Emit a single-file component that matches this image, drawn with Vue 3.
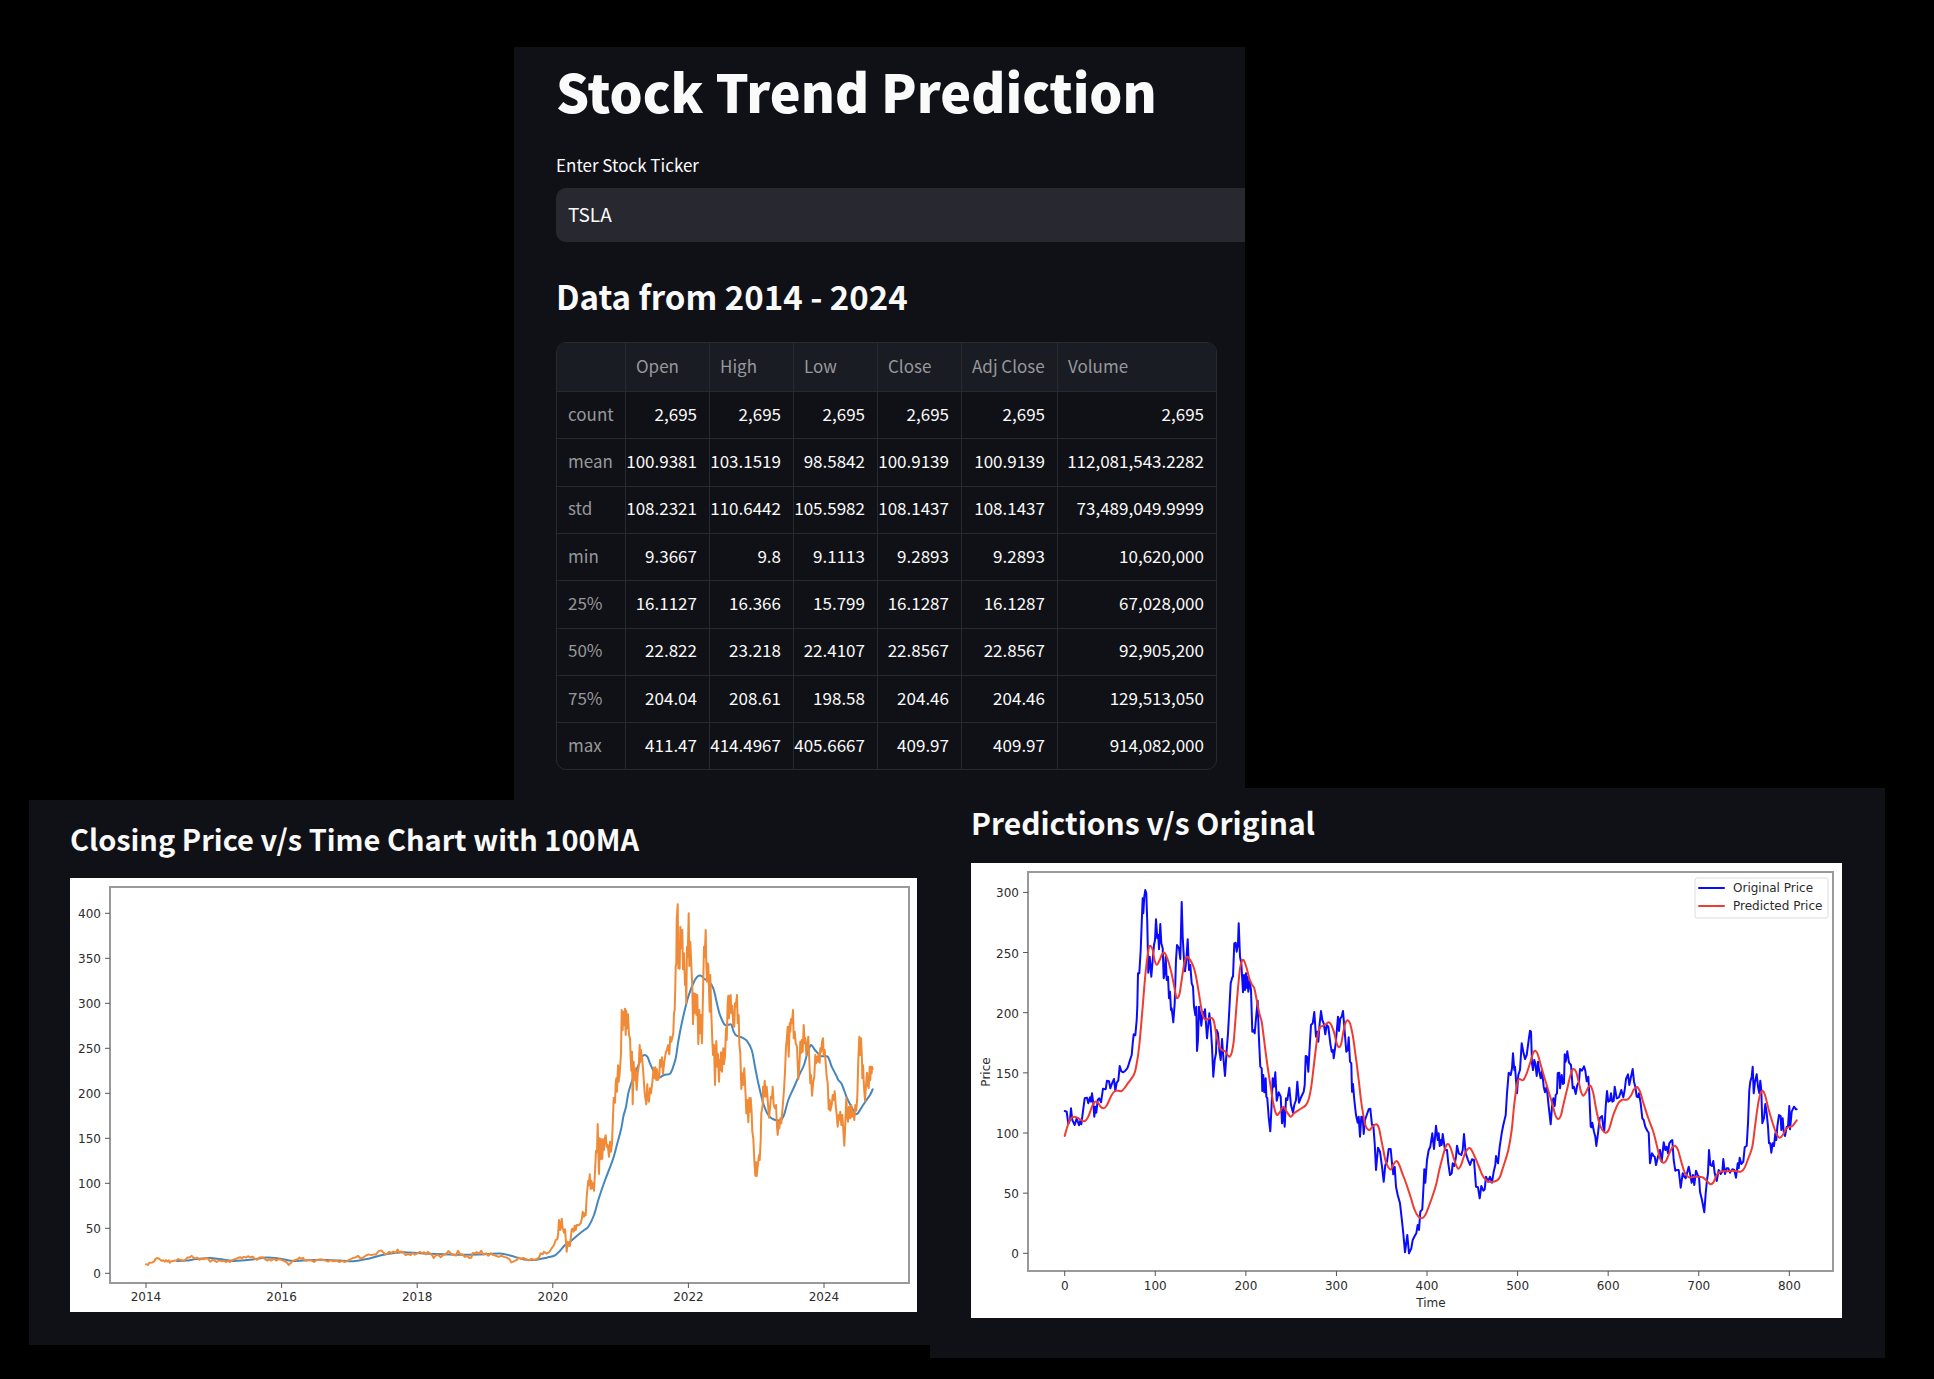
<script setup>
import { ref } from 'vue'

const ticker = ref('TSLA')

const columns = ['Open', 'High', 'Low', 'Close', 'Adj Close', 'Volume']
const rows = [
  ['count', '2,695', '2,695', '2,695', '2,695', '2,695', '2,695'],
  ['mean', '100.9381', '103.1519', '98.5842', '100.9139', '100.9139', '112,081,543.2282'],
  ['std', '108.2321', '110.6442', '105.5982', '108.1437', '108.1437', '73,489,049.9999'],
  ['min', '9.3667', '9.8', '9.1113', '9.2893', '9.2893', '10,620,000'],
  ['25%', '16.1127', '16.366', '15.799', '16.1287', '16.1287', '67,028,000'],
  ['50%', '22.822', '23.218', '22.4107', '22.8567', '22.8567', '92,905,200'],
  ['75%', '204.04', '208.61', '198.58', '204.46', '204.46', '129,513,050'],
  ['max', '411.47', '414.4967', '405.6667', '409.97', '409.97', '914,082,000'],
]

// Every section of a series has its own origin [x, y] and its vertical units per pixel.
const expand = (sections) =>
  sections.flatMap(({ at: [x0, y0], k = 3, d }) =>
    d.split(' ').map((p) => {
      const [x, y] = p.split(',').map(Number)
      return [x0 + x / 3, y0 + y / k]
    })
  )

const line = (sections) => 'M' + expand(sections).map((p) => p.map((n) => n.toFixed(1)).join(',')).join('L')

// Catmull-Rom spline through the points
const curve = (sections) => {
  const p = expand(sections)
  let d = `M${p[0]}`
  for (let i = 0; i < p.length - 1; i++) {
    const a = p[i - 1] || p[i]
    const b = p[i]
    const c = p[i + 1]
    const e = p[i + 2] || c
    const c1 = [b[0] + (c[0] - a[0]) / 6, b[1] + (c[1] - a[1]) / 6]
    const c2 = [c[0] - (e[0] - b[0]) / 6, c[1] - (e[1] - b[1]) / 6]
    d += 'C' + [...c1, ...c2, ...c].map((n) => n.toFixed(1)).join(' ')
  }
  return d
}

const closing = line([
  { at: [-50, -98], k: 2.751, d: '378,1332 384,1334 388,1328 397,1327 403,1324 406,1318 411,1315 417,1317 421,1320 426,1323 430,1321 434,1325 438,1321 442,1325 446,1321 449,1328 454,1324 460,1323 466,1322 470,1321 475,1318 480,1320 488,1322 496,1320 502,1314 508,1314 515,1309 520,1314 526,1316 532,1314 538,1320 544,1317 552,1318 560,1315 565,1318 571,1325 578,1320 584,1322 590,1326 598,1321 606,1324 612,1322 618,1326 624,1323 630,1326 636,1321 645,1318 654,1315 660,1313 666,1315 672,1312 678,1314 684,1310 690,1313 698,1311 704,1317 711,1320 718,1314 728,1313 735,1318 742,1322 748,1318 754,1322 762,1317 769,1322 776,1318 784,1320 792,1323 800,1327 806,1334 813,1328 820,1322 828,1320 834,1318 838,1314 843,1317 850,1315 853,1321 860,1322 868,1320 876,1322 882,1326 888,1321 896,1320 905,1319 914,1321 924,1325 932,1320 940,1324 950,1322 958,1326 966,1323 974,1326 982,1323 990,1319 998,1315 1006,1314 1014,1309 1022,1317 1030,1313 1038,1308 1046,1305 1054,1307 1062,1305 1068,1305 1076,1296 1084,1294 1090,1300 1096,1305 1102,1303 1108,1298 1114,1301 1120,1297 1127,1301 1133,1292 1138,1300 1144,1297 1150,1300 1157,1307 1164,1304 1172,1307 1178,1301 1184,1306 1192,1302 1200,1298 1206,1302 1212,1299 1218,1305 1224,1298 1230,1304 1236,1306 1241,1315 1247,1308 1254,1306 1262,1313 1270,1306 1277,1305 1285,1296 1293,1303 1300,1306 1308,1308 1314,1295 1321,1305 1328,1305 1334,1312 1341,1309 1348,1315 1354,1314 1358,1301 1364,1302 1370,1299 1377,1303 1384,1295 1390,1306 1398,1302 1405,1309 1412,1302 1420,1307 1428,1309 1436,1312 1444,1309 1452,1312 1460,1314 1468,1318 1474,1327 1480,1325 1486,1322 1492,1319' },
  { at: [450, -18], d: '-4,1193 4,1197 10,1194 18,1198 26,1201 34,1197 42,1199 50,1197 56,1194 62,1180 68,1183 72,1175 80,1181 88,1176 95,1165 102,1155 107,1140 112,1138 114,1125 117,1080 121,1110 125,1076 128,1105 132,1118 135,1108 140,1175 143,1145 147,1158 150,1157 155,1108 158,1106 161,1115 164,1097 167,1110 170,1095 176,1096 182,1090 186,1075 188,1055 192,1070 194,1060 197,1066 200,1010 205,962 207,975 209,943 212,987 214,962 217,985 219,970 222,992 225,935 228,872 231,875 233,792 235,880 237,942 239,835 242,898 244,838 247,896 249,838 252,870 254,838 257,826 260,860 263,855 267,890 270,845 273,875 276,850 278,795 281,714 285,728 287,670 289,655 291,695 294,616 296,665 299,640 303,580 305,450 308,510 310,455 313,495 315,446 317,525 319,453 322,505 324,463 327,525 330,535 332,595 334,632 336,575 338,733 341,605 343,660 346,625 350,690 353,640 356,620 359,555 361,605 363,570 367,600 370,640 374,700 379,733 382,673 384,715 387,725 390,685 393,700 397,668 401,623 404,655 406,622 409,660 411,628 414,660 418,650 420,600 423,620 426,592 429,641 433,605 438,575 441,570 444,556 448,583 451,530 454,545 458,528 460,520 462,460 464,450 466,380 467,320 469,310 470,180 473,133 475,325 477,250 479,326 481,200 484,265 487,210 489,328 492,280 495,375 497,350 499,430 501,260 503,290 506,160 508,318 511,245 514,315 517,380 519,493 522,400 524,460 527,402 530,465 532,405 535,552 538,450 541,520 543,465 546,550 549,400 552,260 554,290 557,210' },
  { at: [630, -18], d: '19,310 21,365 23,310 25,316 27,390 29,455 31,345 34,460 37,540 39,585 42,555 45,675 47,580 49,543 52,620 54,582 57,665 59,600 61,630 63,577 66,635 68,590 70,565 72,612 75,590 78,505 80,540 83,430 85,407 87,475 89,410 92,405 94,460 97,437 100,495 103,500 105,430 107,440 111,405 113,490 116,465 118,550 121,580 124,687 127,640 129,675 133,625 135,670 137,710 139,760 142,720 145,787 148,714 150,755 152,714 155,760 157,815 160,835 163,900 166,947 168,907 170,948 174,910 177,885 179,900 182,840 184,760 188,735 189,680 191,710 194,662 197,710 200,680 203,720 207,773 210,745 213,710 216,715 218,680 221,735 225,745 228,735 231,800 233,825 236,785 238,805 241,775 244,790 248,740 252,690 255,635 258,560 260,540 263,500 266,590 269,490 271,515 273,477 276,490 279,450 281,535 284,515 287,550 291,560 295,658 299,600 301,545 303,580 305,540 308,575 311,495 314,550 316,535 319,585 322,555 325,530 328,600 331,670 333,645 336,707 340,665 343,650 346,585 348,610 350,590 353,605 356,580 359,608 361,565 364,575 366,545 369,535 371,585 374,570 377,610 380,650 383,670 386,748 389,720 391,752 395,735 398,705 401,720 404,694 407,735 410,765 413,800 416,765 418,780 421,755 424,795 427,765 430,810 433,857 436,790 439,715 442,770 444,785 447,740 451,775 454,735 457,770 460,755 463,780 466,735 469,752 472,710 475,600 478,530 480,585 483,535 486,600 487,655 489,615 492,680 495,722 498,675 501,638 503,672 506,685 509,620 511,660 513,620 515,640 516,620 518,627' },
])

const average = curve([
  { at: [-50, -98], k: 2.751, d: '470,1323 500,1322 530,1318 570,1315 600,1318 640,1323 690,1320 740,1314 780,1317 820,1323 900,1320 960,1322 1000,1324 1040,1318 1080,1308 1110,1303 1150,1299 1200,1302 1250,1304 1320,1306 1380,1305 1440,1303 1470,1308 1500,1316' },
  { at: [450, -18], d: '20,1199 50,1199 80,1193 105,1186 120,1172 135,1155 150,1146 170,1128 190,1112 205,1100 222,1065 235,1020 250,975 265,935 280,895 292,850 304,805 310,770 318,740 325,700 335,665 345,640 360,605 370,586 382,590 390,610 400,632 410,652 420,652 432,645 450,641 458,625 467,595 474,550 482,505 492,460 502,420 510,395 522,365 532,350 543,347 552,356 565,363 580,385 592,435' },
  { at: [630, -18], d: '60,465 75,495 93,493 100,512 108,526 125,532 140,542 155,570 165,620 175,670 187,720 195,745 205,765 218,777 240,781 252,765 265,720 285,675 300,640 312,615 322,580 333,555 345,570 362,588 383,590 395,620 408,645 415,660 425,672 440,712 455,742 465,762 475,758 485,742 498,722 510,705 518,688' },
])

const original = line([
  { at: [-11, 197], d: '314,153 320,155 325,192 330,180 333,145 337,180 344,195 350,175 357,196 361,182 364,193 368,160 374,115 381,113 385,130 390,112 393,125 396,100 400,130 403,170 406,140 409,158 413,120 418,115 423,127 429,86 437,88 441,62 447,64 451,85 457,68 462,57 466,93 470,68 475,62' },
  { at: [129, -3], d: '59,618 64,634 70,637 76,632 82,625 85,617 90,600 95,585 98,550 101,523 106,526 110,480 112,440 114,340 118,340 122,270 125,190 128,115 130,160 133,110 136,90 139,100 142,190 145,338 149,290 154,350 158,300 162,255 165,240 168,178 172,235 175,225 177,268 181,192 184,250 188,265 191,355 194,340 197,290 200,360 204,350 207,415 210,395 213,450 215,445 220,487 224,430 228,300 231,255 237,265 241,297 245,126 248,230 252,300 255,334 259,300 263,238 267,330 271,315 275,370 279,380 282,440 286,465 289,440 291,573 294,540 297,440 301,465 304,497 308,455 312,470 315,448 321,535 328,460 332,500 336,560 340,650 344,600 348,580 350,510 354,520 358,570 362,600 366,537 370,590 375,648 380,570 384,520 388,450 392,370 397,352 399,350 403,250 407,248 410,275 414,250 416,190 420,290 424,310 429,397 432,345 435,390 438,340 442,385 443,350 445,395 449,365 453,390 457,515 460,510 464,520 468,475 473,422 476,520 481,620 485,625 487,693 490,645 493,697 497,655 499,710 502,715 506,772 511,814 515,730 518,655 522,680 526,637 530,722 536,697 542,710 546,790 550,745 554,800 558,715 562,720 568,683 573,735 579,758 583,735 588,720' },
  { at: [269, 137], d: '172,245 177,308 184,290 191,275 194,255 197,168 201,170 205,215 209,140 213,75 218,70 223,36 228,110 232,95 235,125 239,70 243,33 247,60 251,70 256,103 260,75 265,80 271,130 275,155 279,150 281,175 287,130 290,95 294,50 297,93 301,55 305,50 309,33 313,80 319,155 323,150 326,112 330,185 334,190 336,275 339,252 343,300 348,345 353,368 356,350 360,410 364,350 368,350 371,402 375,360 380,345 386,328 391,326 396,375 400,375 404,430 408,510 414,443 420,455 426,500 431,545 436,495 441,485 446,447 452,447 456,490 460,523 464,500 468,560 473,585 480,610 485,655 490,700 495,757 502,705 507,760 514,745 518,720 524,708 529,700 533,675 537,690 541,635 547,628 551,550 553,508 556,548 561,480 566,450 571,440 577,400 582,447 588,377 593,420 596,400 599,438 603,420 605,435 608,402 615,450 621,450 625,490 630,525 635,520 638,490 643,498 648,470 651,437 656,460 664,465 668,450 672,402 677,460 684,480 690,495 696,478 702,480 708,560 714,562 719,595 724,558 730,572 734,568 738,530 744,545 750,530 756,548 761,515 766,495 768,468 774,490 779,440 785,400 790,375 797,345 801,280 806,218 812,225 816,205 819,160 823,210 825,200 831,280 835,225 840,210 845,130 850,155 855,177 860,165 866,120' },
  { at: [529, -3], d: '90,512 93,515 96,610 99,630 103,600 106,610 110,648 114,605 118,635 122,655 126,630 131,680 135,697 140,680 146,740 152,793 156,740 160,715 164,738 167,705 171,700 173,640 178,638 180,685 185,645 189,672 192,670 194,583 197,605 202,574 207,608 213,615 218,685 222,680 227,702 232,675 237,665 240,627 246,632 252,619 256,632 260,664 265,650 268,700 272,800 275,802 277,788 282,815 286,830 289,858 294,820 299,775 306,768 310,800 313,812 317,740 321,693 325,725 330,722 333,700 337,725 341,722 344,680 350,715 357,712 364,690 370,712 374,690 378,657 384,643 388,675 393,650 398,627 402,665 406,680 410,710 414,712 417,700 422,730 427,775 431,780 436,800 442,812 446,818 450,910 456,880 461,888 464,890 468,915 474,890 480,870 485,905 491,847 496,870 500,860 504,880 508,850 514,842 517,840 521,900 526,932 531,930 536,930 542,983 548,940 553,950 557,955 561,940 566,920 570,940 575,968 579,945 583,975 588,932 593,945 597,950 600,995 606,1020 613,1057 617,1000 621,960 624,940 627,870 631,915 636,918 640,903 644,940 650,963 656,930 662,942 667,935 670,897 675,942 680,925 685,925 690,938 697,928 703,930 708,953 713,910 716,925 719,893 724,912 730,905 734,862 740,857 744,790 748,690 751,665 755,650 758,620 761,700 765,665 770,643 774,680 778,700 781,662 784,690 787,790 792,775 796,732 800,760 804,800 807,850 811,850 814,878 818,850 822,858 826,820 829,840 832,800 837,765 842,768 844,810 848,775 851,815 855,828 860,800 864,800 868,738 870,808 875,755 882,740 888,748 890,748' },
])

const predicted = curve([
  { at: [-11, 197], d: '314,228 322,200 330,178 341,170 352,173 365,181 375,183 385,170 396,140 405,125 414,128 422,140 431,145 441,135 455,105 465,93 475,92 485,93 495,82 505,68' },
  { at: [129, -3], d: '97,652 105,635 112,600 118,555 123,500 128,440 133,380 138,325 143,285 147,262 152,258 158,270 164,302 171,314 179,300 187,281 194,279 202,295 211,325 220,365 228,408 233,414 239,400 245,360 252,315 257,295 263,291 272,302 282,325 291,365 299,415 305,450 311,473 318,480 328,475 337,475 343,490 350,530 358,560 365,570 375,574 383,585 389,590 395,578 401,545 407,470 413,395 420,325 426,302 432,302 440,325 448,355 456,374 463,385 470,420 478,460 485,485 491,530 500,600 508,655 515,700 522,740 530,764 539,757 550,740 560,755 572,770 582,760' },
  { at: [269, 137], d: '180,328 198,315 206,298 213,265 220,210 227,150 233,105 240,82 248,78 258,72 266,67 274,75 283,100 290,130 297,142 304,130 311,90 317,67 323,61 330,70 338,105 346,160 355,230 363,300 370,345 377,378 388,391 397,380 409,373 417,385 426,430 436,480 444,500 453,508 461,492 470,483 478,495 487,520 500,555 513,595 524,630 534,648 546,655 556,645 566,620 577,590 588,555 598,510 608,470 618,438 626,433 634,450 643,480 651,502 657,505 665,490 675,460 684,446 692,446 702,465 715,495 727,525 740,542 755,546 770,542 780,530 790,500 805,450 815,390 822,320 830,260 836,238 850,240 860,220' },
  { at: [529, -3], d: '90,610 100,578 107,573 114,585 125,625 140,675 155,725 166,765 174,777 182,768 190,735 203,680 213,640 220,627 228,635 236,665 243,695 250,707 257,698 265,682 272,678 280,700 288,745 298,790 307,810 317,818 327,808 340,765 355,730 367,719 382,719 392,708 402,688 411,681 420,695 432,735 445,775 460,815 470,855 480,895 489,908 498,903 508,880 517,862 526,858 534,870 545,910 555,940 567,952 580,951 595,950 608,952 620,962 630,972 640,968 650,945 660,935 680,934 700,932 722,935 733,925 745,895 757,860 765,800 773,740 780,705 787,692 795,705 805,745 818,790 830,823 839,833 848,825 860,805 878,797 890,781' },
])

const years = [2014, 2016, 2018, 2020, 2022, 2024].map((label, i) => ({ label, x: 76 + i * 135.6 }))
const closeTicks = [0, 50, 100, 150, 200, 250, 300, 350, 400].map((v) => ({ label: v, y: 395.3 - v * 0.9 }))
const days = [0, 100, 200, 300, 400, 500, 600, 700, 800].map((v) => ({ label: v, x: 93.7 + v * 0.9058 }))
const priceTicks = [0, 50, 100, 150, 200, 250, 300].map((v) => ({ label: v, y: 390.3 - v * 1.203 }))
</script>

<template>
  <main class="page">
    <section class="overview">
      <div class="panel summary">
        <h1>Stock Trend Prediction</h1>
        <label for="ticker">Enter Stock Ticker</label>
        <input id="ticker" v-model="ticker" type="text" />
        <h2>Data from 2014 - 2024</h2>
        <div class="frame">
          <table>
            <colgroup>
              <col class="c-index" />
              <col class="c-num" span="4" />
              <col class="c-adj" />
              <col />
            </colgroup>
            <thead>
              <tr>
                <th></th>
                <th v-for="c in columns" :key="c" scope="col">{{ c }}</th>
              </tr>
            </thead>
            <tbody>
              <tr v-for="r in rows" :key="r[0]">
                <th scope="row">{{ r[0] }}</th>
                <td v-for="(v, i) in r.slice(1)" :key="i">{{ v }}</td>
              </tr>
            </tbody>
          </table>
        </div>
      </div>
    </section>

    <section class="charts">
      <div class="panel closing">
        <h2>Closing Price v/s Time Chart with 100MA</h2>
        <svg class="figure" viewBox="0 0 847 434" role="img" aria-label="Closing price with 100 day moving average">
          <path class="trace" :d="average" stroke="#4586bd" />
          <path class="trace" :d="closing" stroke="#f08a37" />
          <rect class="axes" x="40" y="9" width="799" height="396" />
          <g v-for="t in years" :key="t.label">
            <path class="tick" :d="`M${t.x} 405v5`" />
            <text :x="t.x" y="423" text-anchor="middle">{{ t.label }}</text>
          </g>
          <g v-for="t in closeTicks" :key="t.label">
            <path class="tick" :d="`M40 ${t.y}h-5`" />
            <text x="31" :y="t.y + 5" text-anchor="end">{{ t.label }}</text>
          </g>
        </svg>
      </div>

      <div class="panel forecast">
        <h2>Predictions v/s Original</h2>
        <svg class="figure" viewBox="0 0 871 455" role="img" aria-label="Original and predicted price">
          <path class="trace" :d="original" stroke="#0a0aff" />
          <path class="trace" :d="predicted" stroke="#f03c30" />
          <rect class="axes" x="57" y="9" width="805" height="399" />
          <g v-for="t in days" :key="t.label">
            <path class="tick" :d="`M${t.x} 408v5`" />
            <text :x="t.x" y="427" text-anchor="middle">{{ t.label }}</text>
          </g>
          <g v-for="t in priceTicks" :key="t.label">
            <path class="tick" :d="`M57 ${t.y}h-5`" />
            <text x="48" :y="t.y + 5" text-anchor="end">{{ t.label }}</text>
          </g>
          <text x="460" y="444" text-anchor="middle">Time</text>
          <text transform="translate(19 209) rotate(-90)" text-anchor="middle">Price</text>
          <rect class="legend" x="724" y="15" width="133" height="40" rx="2" />
          <path class="trace" d="M728 25h25" stroke="#0a0aff" />
          <path class="trace" d="M728 43h25" stroke="#f03c30" />
          <text x="762" y="29">Original Price</text>
          <text x="762" y="47">Predicted Price</text>
        </svg>
      </div>
    </section>
  </main>
</template>

<style>
body {
  margin: 0;
  background: #000;
}
</style>

<style scoped>
.page {
  box-sizing: border-box;
  min-height: 100vh;
  padding: 47px 49px 21px 29px;
  background: #000;
  color: #fafafa;
  font-family: "Noto Sans CJK SC", "Noto Sans", sans-serif;
}

.panel {
  box-sizing: border-box;
  background: #101116;
}

.overview {
  display: grid;
  grid-template-columns: 485fr 731fr 640fr;
}

.summary {
  grid-column: 2;
  display: flex;
  flex-direction: column;
  min-width: 0;
  padding: 14px 0 30px 42px;
}

h1,
h2 {
  margin: 0;
  font-weight: 700;
}

h1 {
  font-size: 52px;
  font-weight: 900;
  line-height: 60px;
}

h2 {
  font-size: 33px;
  line-height: 40px;
}

label {
  margin-top: 32px;
  font-size: 17px;
  line-height: 24px;
}

input {
  box-sizing: border-box;
  width: 100%;
  height: 54px;
  margin: 11px 0 34px;
  padding: 0 12px 3px;
  border: 0;
  border-radius: 10px 0 0 10px;
  background: #272830;
  color: #fafafa;
  font: inherit;
  font-size: 19px;
}

.frame {
  margin: 26px 28px 0 0;
  overflow: hidden;
  border: 1px solid #282a2f;
  border-radius: 10px;
}

table {
  width: 100%;
  height: 426px;
  border-collapse: separate;
  border-spacing: 0;
  table-layout: fixed;
  font-size: 17px;
  line-height: 24px;
}

.c-index {
  width: 69px;
}

.c-num {
  width: 84px;
}

.c-adj {
  width: 96px;
}

th,
td {
  padding: 0 0 3px;
  border: 0 solid #282a2f;
  border-width: 0 1px 1px 0;
  font-weight: 400;
  white-space: nowrap;
}

th:last-child,
td:last-child {
  border-right: 0;
}

tbody tr:last-child > * {
  border-bottom: 0;
}

th {
  color: #97989b;
  text-align: left;
}

thead th {
  height: 45px;
  padding-left: 10px;
  background: #1a1c24;
}

tbody th {
  padding-left: 11px;
}

td {
  padding-right: 12px;
  text-align: right;
}

.charts {
  display: grid;
  grid-template-columns: 901fr 955fr;
  align-items: start;
  margin-top: -12px;
}

.closing {
  margin-top: 12px;
  padding: 18px 13px 33px 41px;
}

.closing h2 {
  font-size: 29px;
}

.forecast {
  padding: 14px 43px 40px 41px;
}

.forecast h2 {
  font-size: 30px;
}

.figure {
  display: block;
  width: 100%;
  margin-top: 20px;
  background: #fff;
}

.forecast .figure {
  margin-top: 21px;
}

.figure text {
  fill: #2c2c2c;
  font-family: "DejaVu Sans", sans-serif;
  font-size: 12px;
}

.axes {
  fill: none;
  stroke: #999;
  stroke-width: 2;
}

.tick {
  stroke: #555;
  stroke-width: 1;
}

.legend {
  fill: #fff;
  stroke: #ddd;
}

.trace {
  fill: none;
  stroke-width: 2;
  stroke-linejoin: round;
  stroke-linecap: round;
}
</style>
